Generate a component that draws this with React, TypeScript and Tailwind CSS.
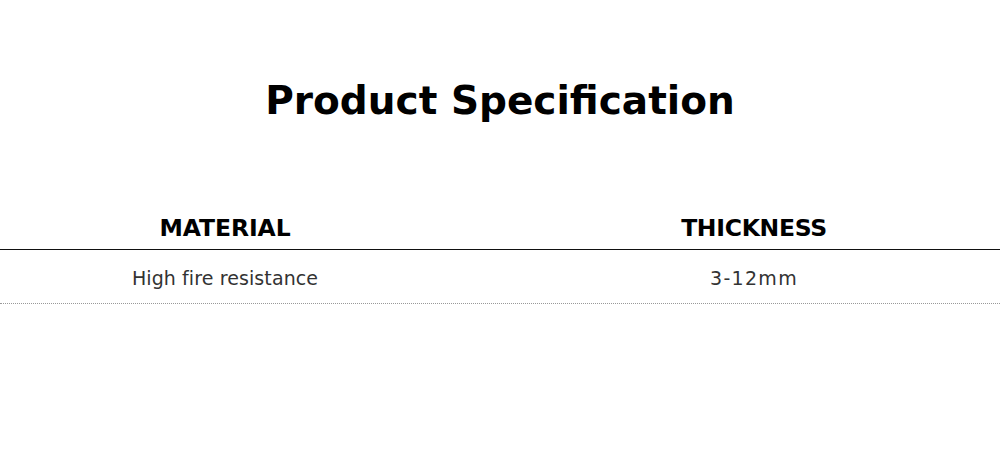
export default function App() {
  return (
    <div className="w-[1000px] h-[449px] bg-white overflow-hidden" style={{ fontFamily: '"DejaVu Sans", sans-serif' }}>
      <h1 className="pt-[77px] text-center text-[39px] leading-[48px] font-bold text-black">
        Product Specification
      </h1>
      <div className="mt-[91px] grid grid-cols-[450px_1fr] gap-x-[58px] border-b border-[#111] pb-[9px]">
        <div className="text-center text-[23.5px] leading-[24px] font-bold text-black tracking-[-0.1px]">MATERIAL</div>
        <div className="text-center text-[23.5px] leading-[24px] font-bold text-black tracking-[-0.3px]">THICKNESS</div>
      </div>
      <div className="grid grid-cols-[450px_1fr] gap-x-[58px] pt-[18px] pb-[15px] border-b border-dotted border-[#999]">
        <div className="text-center text-[19px] leading-[20px] text-[#333] tracking-[0.1px]">High fire resistance</div>
        <div className="text-center text-[19px] leading-[20px] text-[#333] tracking-[1.3px]">3-12mm</div>
      </div>
    </div>
  );
}
